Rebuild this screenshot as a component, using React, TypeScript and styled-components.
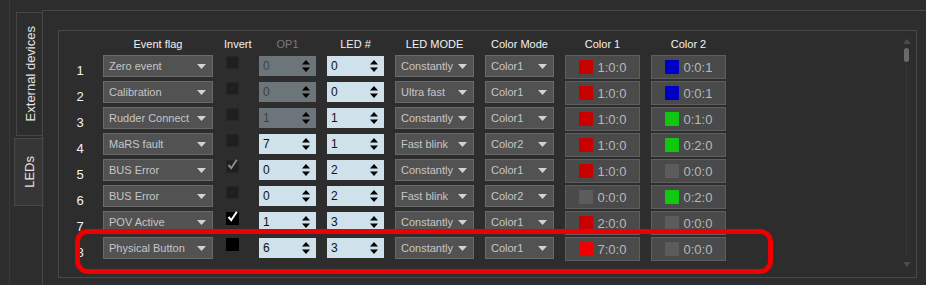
import React from 'react'
import styled, { createGlobalStyle } from 'styled-components'

const GlobalStyle = createGlobalStyle`
    html, body {
        margin: 0;
        padding: 0;
        background: #2d2d2d;
    }
    body {
        font-family: "Liberation Sans", Arial, sans-serif;
        font-size: 11px;
        color: #e8e8e8;
    }
`

type LedRow = {
    flag: string
    invert: 'off' | 'dimcheck' | 'check' | 'black'
    op1: number
    op1Disabled?: boolean
    led: number
    mode: string
    colorMode: string
    c1: [string, string]
    c2: [string, string]
}

const RED = '#c80000'
const BLUE = '#0000c4'
const GREEN = '#10c810'
const OFF = '#5c5c5c'

const rows: LedRow[] = [
    { flag: 'Zero event', invert: 'off', op1: 0, op1Disabled: true, led: 0, mode: 'Constantly', colorMode: 'Color1', c1: [RED, '1:0:0'], c2: [BLUE, '0:0:1'] },
    { flag: 'Calibration', invert: 'off', op1: 0, op1Disabled: true, led: 0, mode: 'Ultra fast', colorMode: 'Color1', c1: [RED, '1:0:0'], c2: [BLUE, '0:0:1'] },
    { flag: 'Rudder Connect', invert: 'off', op1: 1, op1Disabled: true, led: 1, mode: 'Constantly', colorMode: 'Color1', c1: [RED, '1:0:0'], c2: [GREEN, '0:1:0'] },
    { flag: 'MaRS fault', invert: 'off', op1: 7, led: 1, mode: 'Fast blink', colorMode: 'Color2', c1: [RED, '1:0:0'], c2: [GREEN, '0:2:0'] },
    { flag: 'BUS Error', invert: 'dimcheck', op1: 0, led: 2, mode: 'Constantly', colorMode: 'Color1', c1: [RED, '1:0:0'], c2: [OFF, '0:0:0'] },
    { flag: 'BUS Error', invert: 'off', op1: 0, led: 2, mode: 'Fast blink', colorMode: 'Color2', c1: [OFF, '0:0:0'], c2: [GREEN, '0:2:0'] },
    { flag: 'POV Active', invert: 'check', op1: 1, led: 3, mode: 'Constantly', colorMode: 'Color1', c1: [RED, '2:0:0'], c2: [OFF, '0:0:0'] },
    { flag: 'Physical Button', invert: 'black', op1: 6, led: 3, mode: 'Constantly', colorMode: 'Color1', c1: ['#f00000', '7:0:0'], c2: [OFF, '0:0:0'] },
]

const App = () => {
    return (
        <>
            <GlobalStyle />
            <Page>
                <Rail>
                    <Tab>
                        <TabLabel>External devices</TabLabel>
                    </Tab>
                    <Tab active>
                        <TabLabel>LEDs</TabLabel>
                    </Tab>
                </Rail>
                <Main>
                    <Panel>
                        <Table>
                            <span />
                            <Head>Event flag</Head>
                            <Head>Invert</Head>
                            <Head disabled>OP1</Head>
                            <Head>LED #</Head>
                            <Head>LED MODE</Head>
                            <Head>Color Mode</Head>
                            <Head>Color 1</Head>
                            <Head>Color 2</Head>
                            {rows.map((r, i) => (
                                <React.Fragment key={i}>
                                    <RowNum>{i + 1}</RowNum>
                                    <Combo>
                                        <span>{r.flag}</span>
                                        <ComboArrow />
                                    </Combo>
                                    <CheckCell>
                                        <Check state={r.invert}>
                                            {(r.invert === 'check' || r.invert === 'dimcheck') && (
                                                <svg width="13" height="13" viewBox="0 0 13 13">
                                                    <path d="M2.5 7 L5.2 10.2 L10.8 1.8" fill="none" stroke={r.invert === 'check' ? '#fff' : '#8a8a8a'} strokeWidth="2" />
                                                </svg>
                                            )}
                                        </Check>
                                    </CheckCell>
                                    <Spin disabled={r.op1Disabled}>
                                        <span>{r.op1}</span>
                                        <SpinArrows />
                                    </Spin>
                                    <Spin>
                                        <span>{r.led}</span>
                                        <SpinArrows />
                                    </Spin>
                                    <Combo>
                                        <span>{r.mode}</span>
                                        <ComboArrow />
                                    </Combo>
                                    <Combo>
                                        <span>{r.colorMode}</span>
                                        <ComboArrow />
                                    </Combo>
                                    <ColorButton>
                                        <Swatch style={{ background: r.c1[0] }} />
                                        {r.c1[1]}
                                    </ColorButton>
                                    <ColorButton>
                                        <Swatch style={{ background: r.c2[0] }} />
                                        {r.c2[1]}
                                    </ColorButton>
                                </React.Fragment>
                            ))}
                        </Table>
                        <ScrollBar>
                            <svg width="8" height="5" viewBox="0 0 8 5"><path d="M0 5 L4 0 L8 5 Z" fill="#4c4c4c" /></svg>
                            <Thumb />
                            <Track />
                            <svg width="8" height="5" viewBox="0 0 8 5"><path d="M0 0 L4 5 L8 0 Z" fill="#4c4c4c" /></svg>
                        </ScrollBar>
                    </Panel>
                </Main>
                <Highlight />
            </Page>
        </>
    )
}

const ComboArrow = () => (
    <svg width="9" height="5" viewBox="0 0 9 5">
        <path d="M0 0 L9 0 L4.5 5 Z" fill="#d2d2d2" />
    </svg>
)

const SpinArrows = () => (
    <svg width="8" height="14" viewBox="0 0 8 14">
        <path d="M0 5.5 L4 1 L8 5.5 Z" fill="#000" />
        <path d="M0 8.5 L8 8.5 L4 13 Z" fill="#000" />
    </svg>
)

const Page = styled.div`
    position: relative;
    display: flex;
    height: 285px;
    width: 926px;
    overflow: hidden;
`

const Rail = styled.div`
    width: 33px;
    margin-left: 9px;
    border-left: 1px solid #3a3a3a;
    padding: 12px 0 0 4px;
    display: flex;
    flex-direction: column;
    align-items: flex-start;
    gap: 2px;
    box-sizing: border-box;
`

const Tab = styled.div<{ active?: boolean }>`
    box-sizing: border-box;
    width: ${p => (p.active ? '30px' : '27px')};
    height: ${p => (p.active ? '68px' : '124px')};
    margin-left: ${p => (p.active ? '0' : '2px')};
    border: 1px solid ${p => (p.active ? '#484848' : '#454545')};
    border-right: none;
    background: ${p => (p.active ? '#363636' : '#2d2d2d')};
    display: flex;
    align-items: center;
    justify-content: center;
`

const TabLabel = styled.span`
    writing-mode: vertical-rl;
    transform: rotate(180deg);
    font-size: 13px;
    color: #e4e4e4;
    white-space: nowrap;
`

const Main = styled.div`
    flex: 1;
    margin-top: 10px;
    border-top: 1px solid #474747;
    border-left: 1px solid #474747;
    padding: 19px 9px 7px 15px;
    display: flex;
`

const Panel = styled.div`
    flex: 1;
    border: 1px solid #484848;
    display: flex;
    justify-content: space-between;
`

const Table = styled.div`
    display: grid;
    grid-template-columns: 33px 110px 24px 57px 57px 79px 69px 75px 75px;
    grid-template-rows: 24px repeat(8, 26px);
    column-gap: 11px;
    align-items: start;
`

const Head = styled.div<{ disabled?: boolean }>`
    align-self: end;
    margin-bottom: 4px;
    text-align: center;
    white-space: nowrap;
    color: ${p => (p.disabled ? '#7a7a7a' : '#f2f2f2')};
    line-height: 13px;
`

const RowNum = styled.div`
    padding: 9px 0 0 9px;
    text-align: center;
    font-size: 13px;
    line-height: 14px;
    color: #f4f4f4;
`

const Combo = styled.div`
    box-sizing: border-box;
    height: 22px;
    border: 1px solid #6a6a6a;
    background: #525252;
    color: #c6c6c6;
    display: flex;
    align-items: center;
    justify-content: space-between;
    padding: 0 6px 0 5px;
    white-space: nowrap;
    overflow: hidden;
`

const CheckCell = styled.div`
    padding: 1px 0 0 2px;
`

const Check = styled.div<{ state: string }>`
    box-sizing: border-box;
    width: 13px;
    height: 13px;
    background: ${p => (p.state === 'check' || p.state === 'black' ? '#000' : '#1f1f1f')};
    border: 1px solid ${p => (p.state === 'check' || p.state === 'black' ? '#000' : '#262626')};
    display: flex;
    svg {
        margin: -3px 0 0 -1px;
        overflow: visible;
    }
`

const Spin = styled.div<{ disabled?: boolean }>`
    box-sizing: border-box;
    margin-top: 1px;
    height: 20px;
    background: ${p => (p.disabled ? '#6c7579' : '#cfe1eb')};
    color: ${p => (p.disabled ? '#3c4244' : '#111')};
    display: flex;
    align-items: center;
    justify-content: space-between;
    padding: 0 6px 0 4px;
    font-size: 12px;
`

const ColorButton = styled.div`
    box-sizing: border-box;
    height: 24px;
    border: 1px solid #5e5e5e;
    background: #4a4a4a;
    color: #b8b8b8;
    font-size: 13px;
    display: flex;
    align-items: center;
    justify-content: center;
    gap: 5px;
`

const Swatch = styled.span`
    width: 14px;
    height: 14px;
    border-radius: 1px;
`

const ScrollBar = styled.div`
    width: 9px;
    margin: 8px 5px 10px 0;
    display: flex;
    flex-direction: column;
    align-items: center;
`

const Thumb = styled.div`
    margin-top: 4px;
    width: 5px;
    height: 14px;
    border-radius: 3px;
    background: #6a6a6a;
`

const Track = styled.div`
    flex: 1;
    width: 1px;
    margin: 2px 0 6px;
    background: #363636;
`

const Highlight = styled.div`
    position: absolute;
    left: 75px;
    top: 229px;
    width: 698px;
    height: 45px;
    box-sizing: border-box;
    border: 5px solid #ee0000;
    border-radius: 13px;
    pointer-events: none;
`

export default App
